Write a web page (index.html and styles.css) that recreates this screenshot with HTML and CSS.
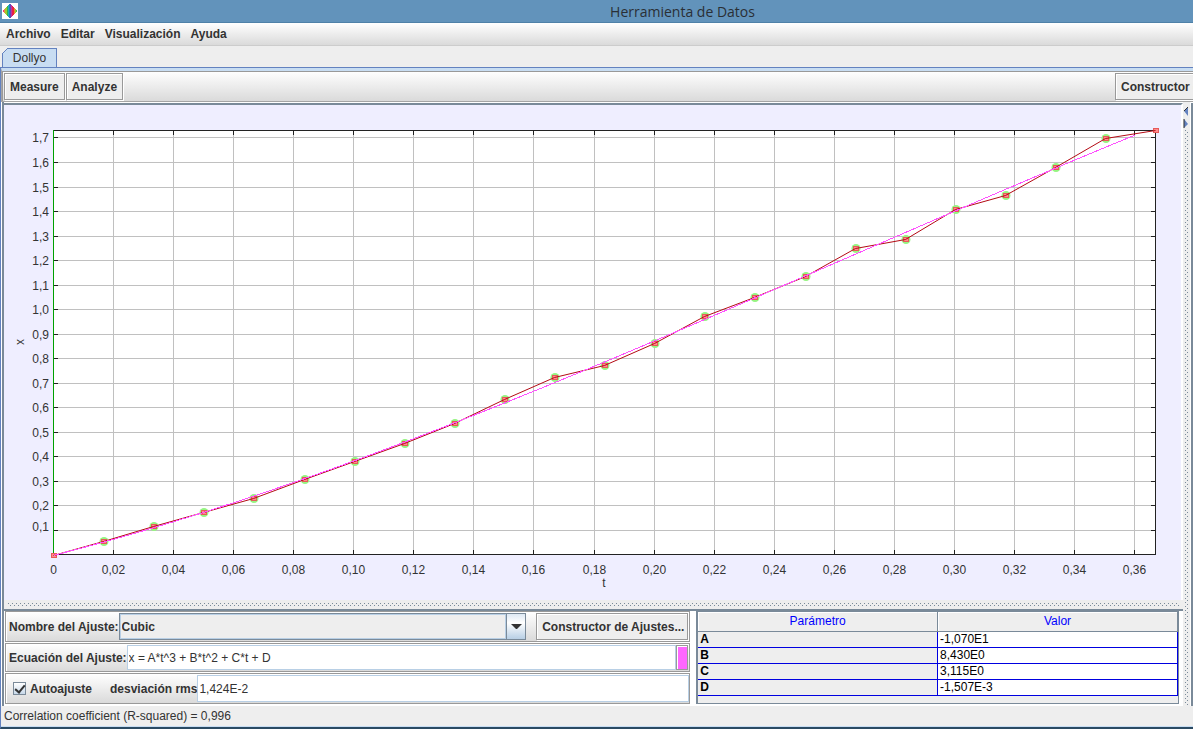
FILE: index.html
```html
<!DOCTYPE html>
<html lang="es">
<head>
    <meta charset="utf-8">
    <title>Herramienta de Datos</title>
    <link rel="stylesheet" href="styles.css">
</head>
<body>
    <header class="titlebar">
        <svg class="app-icon" width="16" height="16" viewBox="0 0 16 16">
            <rect width="16" height="16" fill="#fff"/>
            <path d="M1 7h1v2H1z" fill="#f03c78"/>
            <path d="M2 6h1v4H2z" fill="#f08c3c"/>
            <path d="M3 5h1v6H3zM4 4h1v8H4z" fill="#a0c832"/>
            <path d="M5 3h1v10H5z" fill="#32b450"/>
            <path d="M6 2h1v12H6z" fill="#1eb4b4"/>
            <path d="M7 1h1v14H7z" fill="#2878c8"/>
            <path d="M8 1h1v14H8z" fill="#6446b4"/>
            <path d="M9 2h1v12H9z" fill="#be32a0"/>
            <path d="M10 3h1v10h-1z" fill="#e61e50"/>
            <path d="M11 4h1v8h-1z" fill="#e6283c"/>
            <path d="M12 5h1v6h-1z" fill="#f08232"/>
            <path d="M13 6h1v4h-1z" fill="#a0c832"/>
            <path d="M14 7h1v2h-1z" fill="#50b450"/>
        </svg>
        <h1>Herramienta de Datos</h1>
    </header>

    <nav class="menubar">
        <button>Archivo</button>
        <button>Editar</button>
        <button>Visualización</button>
        <button>Ayuda</button>
    </nav>

    <div class="tabs">
        <button class="tab">
            <svg class="tab-corner" width="6" height="6" viewBox="0 0 6 6">
                <path d="M0 0h6L0 6z" fill="#eee"/>
                <path d="M0 6L6 0" stroke="#6382bf"/>
            </svg>
            Dollyo
        </button>
    </div>

    <main class="content">
        <div class="toolbar">
            <button class="btn">Measure</button>
            <button class="btn">Analyze</button>
            <button class="btn btn-cut">Constructor de</button>
        </div>

        <div class="split">
            <div class="left">
                <div class="plot">
                    <svg id="plot" viewBox="4 105 1177 495"></svg>
                </div>
                <div class="divider-h"></div>

                <div class="bottom">
                    <div class="fit">
                        <div class="row">
                            <label for="fitName">Nombre del Ajuste:</label>
                            <div class="combo">
                                <select id="fitName">
                                    <option>Cubic</option>
                                </select>
                                <span class="combo-arrow">
                                    <svg width="11" height="6" viewBox="0 0 11 6"><path d="M0 0h11L6 5H5z" fill="#333"/></svg>
                                </span>
                            </div>
                            <button class="btn btn-fit">Constructor de Ajustes...</button>
                        </div>
                        <div class="row row-equation">
                            <label for="equation">Ecuación del Ajuste:</label>
                            <input type="text" id="equation" value="x = A*t^3 + B*t^2 + C*t + D">
                            <button class="color-btn" aria-label="Color"></button>
                        </div>
                        <div class="row">
                            <input type="checkbox" id="autofit" checked>
                            <label class="autofit-label" for="autofit">Autoajuste</label>
                            <label for="rms">desviación rms</label>
                            <input type="text" id="rms" value="1,424E-2">
                        </div>
                    </div>

                    <div class="params">
                        <table>
                            <thead>
                                <tr><th>Parámetro</th><th>Valor</th></tr>
                            </thead>
                            <tbody>
                                <tr><th>A</th><td>-1,070E1</td></tr>
                                <tr><th>B</th><td>8,430E0</td></tr>
                                <tr><th>C</th><td>3,115E0</td></tr>
                                <tr><th>D</th><td>-1,507E-3</td></tr>
                            </tbody>
                        </table>
                    </div>
                </div>
            </div>

            <div class="divider-v">
                <svg width="6" height="27" viewBox="0 0 6 27">
                    <path d="M0 0h6v27H0z" fill="#eee"/>
                    <path d="M5 5v9L1 9z" fill="#6382bf"/>
                    <path d="M5 5L1 9" stroke="#333"/>
                    <path d="M1 17v9l4-4z" fill="#6382bf"/>
                    <path d="M1 17v9" stroke="#333"/>
                </svg>
            </div>
            <div class="edge"></div>
        </div>

        <div class="status">Correlation coefficient (R-squared) = 0,996</div>
    </main>

    <script src="script.js"></script>
</body>
</html>
```
FILE: styles.css
```css
* {
    box-sizing: border-box;
}

body {
    margin: 0;
    height: 100vh;
    display: flex;
    flex-direction: column;
    overflow: hidden;
    background-color: #eee;
    color: #333;
    font: 12px "Liberation Sans", Arial, sans-serif;
}

button,
input,
select {
    font: inherit;
    color: inherit;
    margin: 0;
}

/* Title bar */
.titlebar {
    display: flex;
    align-items: center;
    height: 23px;
    padding: 0 2px;
    background-color: #6293bb;
    border-bottom: 1px solid #4f81a8;
}

.app-icon {
    flex: none;
}

.titlebar h1 {
    flex: 1;
    margin: 0;
    padding-left: 156px;
    text-align: center;
    font: 14px "Open Sans", "Noto Sans", sans-serif;
    color: #2a2f35;
}

/* Menu */
.menubar {
    display: flex;
    height: 23px;
    padding-left: 1px;
    background: linear-gradient(#fff, #dadada);
    border-bottom: 1px solid #ccc;
}

.menubar button {
    padding: 0 5px;
    border: none;
    background: none;
    font-weight: bold;
}

/* Tabs */
.tabs {
    display: flex;
    height: 21px;
    padding: 2px 2px 0;
}

.tab {
    position: relative;
    width: 55px;
    padding: 0;
    border: 1px solid #6382bf;
    border-bottom: none;
    background-color: #c8ddf2;
}

.tab-corner {
    position: absolute;
    top: -1px;
    left: -1px;
}

.content {
    flex: 1;
    min-height: 0;
    display: flex;
    flex-direction: column;
    border-top: 1px solid #6382bf;
    border-left: 1px solid #6382bf;
    border-bottom: 2px solid #2a4a63;
}

/* Toolbar */
.toolbar {
    display: flex;
    gap: 1px;
    height: 34px;
    padding: 2px 0 1px 2px;
    border: 1px solid #a5a5a5;
    border-width: 1px 0 1px 1px;
    border-top: 3px solid #c8ddf2;
    background: linear-gradient(#fff, #dadada);
    box-shadow: inset 0 1px #999, inset 1px 0 #999;
}

.btn {
    flex: none;
    padding: 0 5px;
    border: 1px solid #999;
    box-shadow: inset 1px 1px #fff, 1px 1px #fff;
    background-color: #eee;
    font-weight: bold;
    white-space: nowrap;
}

.btn-cut {
    width: 78px;
    margin-left: auto;
    border-right: none;
    overflow: hidden;
    text-align: left;
}

/* Main area */
.split {
    flex: 1;
    min-height: 0;
    display: flex;
    padding-left: 1px;
    background-color: #fff;
}

.left {
    flex: 1;
    min-width: 0;
    display: flex;
    flex-direction: column;
    border-left: 2px solid #7a8a99;
}

.plot {
    flex: 1;
    min-height: 0;
    margin-top: 1px;
    border-top: 2px solid #7a8a99;
    border-right: 2px solid #fff;
    background-color: #efeeff;
}

.plot svg {
    display: block;
    width: 100%;
    height: 100%;
}

.plot text {
    fill: #333;
}

.divider-h,
.divider-v {
    background-color: #eee;
    background-image:
        conic-gradient(from 270deg at 1px 1px, #7a8a99 90deg, transparent 0),
        conic-gradient(from 270deg at 1px 1px, #7a8a99 90deg, transparent 0);
    background-size: 4px 4px;
    background-position: 0 0, 2px 2px;
    background-clip: padding-box;
}

.divider-h {
    height: 9px;
    border: solid #eee;
    border-width: 3px 4px 2px;
}

.divider-v {
    flex: none;
    width: 7px;
    border: solid #eee;
    border-width: 0 1px 0 2px;
}

.divider-v svg {
    display: block;
    margin-left: -2px;
}

.edge {
    width: 3px;
    margin-top: 1px;
    border-left: 1px solid #fff;
    background-color: #7a8a99;
}

/* Fit panel */
.bottom {
    display: flex;
    gap: 6px;
    padding-bottom: 2px;
    border-top: 2px solid #7a8a99;
}

.fit {
    flex: none;
    width: 58.2%;
    display: flex;
    flex-direction: column;
    gap: 1px;
    padding-left: 1px;
}

.row {
    display: flex;
    align-items: stretch;
    height: 31px;
    padding: 1px 0 1px 3px;
    border: 1px solid #999;
    box-shadow: inset 1px 1px #fff;
    background: linear-gradient(#fff, #dadada);
}

.row-equation {
    height: 29px;
}

.row label {
    align-self: center;
    font-weight: bold;
    white-space: nowrap;
}

.row input[type="text"] {
    flex: 1;
    min-width: 0;
    padding: 0 1px;
    border: 1px solid #b8cfe5;
    border-radius: 0;
    background-color: #fff;
}

.combo {
    flex: 1;
    display: flex;
    margin: 0 10px 0 0;
    border: 1px solid #7a8a99;
}

.combo select {
    flex: 1;
    appearance: none;
    padding: 0 1px;
    border: 1px solid #b8cfe5;
    border-radius: 0;
    background-color: #eee;
    font-weight: bold;
}

.combo-arrow {
    display: flex;
    align-items: center;
    justify-content: center;
    width: 19px;
    border-left: 1px solid #7a8a99;
    background: linear-gradient(#dde8f3, #fff 35%, #b8cfe5);
}

.btn-fit {
    width: 152px;
    margin-right: 1px;
}

.color-btn {
    width: 12px;
    padding: 0;
    border: 1px solid #999;
    box-shadow: inset 1px 1px #fff;
    background-color: #ff66ff;
    margin-right: 1px;
}

.row input[type="checkbox"] {
    appearance: none;
    align-self: center;
    width: 13px;
    height: 13px;
    margin: 0 4px;
    border: 1px solid #7a8a99;
    background: linear-gradient(#fff, #c8d9ea);
}

.row input[type="checkbox"]:checked::after {
    content: "";
    display: block;
    width: 4px;
    height: 8px;
    margin: 0 auto;
    border: solid #333;
    border-width: 0 2px 2px 0;
    transform: rotate(40deg);
}

.row .autofit-label {
    margin-right: 18px;
}

/* Parameters table */
.params {
    flex: 1;
    margin-right: 4px;
    border: 1px solid #7a8a99;
    border-left-width: 2px;
    background-color: #eee;
}

.params table {
    width: 100%;
    table-layout: fixed;
    border-collapse: separate;
    border-spacing: 0;
    color: #000;
}

.params th,
.params td {
    height: 16px;
    padding: 0 2px;
    border-bottom: 1px solid #0000e0;
    line-height: 15px;
    text-align: left;
}

.params thead th {
    height: 20px;
    border-bottom: 1px solid #7a8a99;
    border-right: 1px solid #7a8a99;
    box-shadow: inset 1px 1px #fff;
    color: #0000ff;
    font-weight: normal;
    text-align: center;
}

.params tbody th,
.params td {
    border-right: 1px solid #0000e0;
}

.params td {
    background-color: #fff;
}

.status {
    height: 21px;
    padding: 0 3px;
    border-bottom: 1px solid #c8ddf2;
    line-height: 21px;
}
```
FILE: script.js
```javascript
// Plot area inside the svg
const left = 53;
const right = 1155;
const top_ = 130;
const bottom = 554;
const scaleT = 3003;
const scaleX = 245;

const data = [0, 0.055, 0.116, 0.173, 0.23, 0.307, 0.381, 0.455, 0.536, 0.634,
    0.723, 0.773, 0.863, 0.972, 1.05, 1.136, 1.25, 1.286, 1.409, 1.466, 1.58, 1.7, 1.733];

const px = (t) => left + t * scaleT;
const py = (x) => bottom - x * scaleX;
const comma = (n, digits) => n.toFixed(digits).replace(".", ",");

let grid = "";
let ticks = "";
let labels = "";

for (let i = 0; i <= 18; i++) {
    const x = Math.round(px(i * 0.02)) + 0.5;
    if (i > 0) {
        grid += `M${x} ${top_}V${bottom}`;
        ticks += `M${x} ${top_}v5M${x} ${bottom}v-4`;
    }
    labels += `<text x="${x}" y="574" text-anchor="middle">${i ? comma(i * 0.02, 2) : "0"}</text>`;
}

for (let i = 1; i <= 17; i++) {
    const y = Math.round(py(i * 0.1)) + 0.5;
    grid += `M${left} ${y}H${right}`;
    ticks += `M${left} ${y}h5M${right} ${y}h-4`;
    const labelY = i === 1 ? y : y + 4;
    labels += `<text x="49" y="${labelY}" text-anchor="end">${comma(i * 0.1, 1)}</text>`;
}

// Cubic fit
let fit = "";
for (let t = 0; t <= 0.364; t += 0.004) {
    const x = -10.7 * t ** 3 + 8.43 * t ** 2 + 3.115 * t - 0.001507;
    fit += `${px(t) + 0.5},${Math.max(top_, py(x) + 1)} `;
}

let points = "";
let halos = "";
let markers = "";
data.forEach((value, i) => {
    const x = Math.round(px(i / 59.94));
    const y = Math.round(py(value) + 0.5);
    points += `${x + 0.5},${y + 0.5} `;
    if (i > 0 && i < data.length - 1) {
        halos += `<circle cx="${x + 1}" cy="${y + 0.5}" r="4.5"/>`;
    }
    markers += `<rect x="${x - 1.5}" y="${y - 1.5}" width="5" height="4"/>`;
});

document.getElementById("plot").innerHTML = `
    <rect x="${left}" y="${top_}" width="${right - left}" height="${bottom - top_}" fill="#fff"/>
    <path d="${grid}" stroke="#c0c0c0" shape-rendering="crispEdges"/>
    <path d="M${left} ${top_ + 0.5}H${right + 0.5}V${bottom + 0.5}H${left}${ticks}" fill="none" stroke="#222" shape-rendering="crispEdges"/>
    <path d="M${left + 0.5} ${top_}V${bottom}" stroke="#00a000" shape-rendering="crispEdges"/>
    <g fill="#96f582">${halos}</g>
    <g fill="#ff8c8c" stroke="#e65a5a">${markers}</g>
    <polyline points="${points}" fill="none" stroke="#b40a14"/>
    <polyline points="${fit}" fill="none" stroke="#ff50ff" shape-rendering="crispEdges"/>
    ${labels}
    <text x="604" y="587" text-anchor="middle">t</text>
    <text transform="translate(24 342) rotate(-90)" text-anchor="middle">x</text>`;
```
